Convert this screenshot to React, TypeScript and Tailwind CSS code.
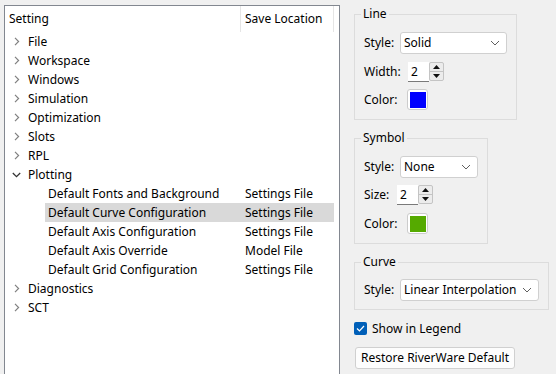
import React from "react";

const ChevRight = () => (
  <svg width="6" height="9" viewBox="0 0 6 9">
    <path d="M1 0.8 L4.6 4.5 L1 8.2" fill="none" stroke="#808080" strokeWidth="1.2" />
  </svg>
);
const ChevDown = () => (
  <svg width="9" height="6" viewBox="0 0 9 6">
    <path d="M0.8 1 L4.5 4.6 L8.2 1" fill="none" stroke="#333" strokeWidth="1.3" />
  </svg>
);
const ComboChev = () => (
  <svg width="10" height="6" viewBox="0 0 10 6">
    <path d="M1 1 L5 5 L9 1" fill="none" stroke="#606060" strokeWidth="1" />
  </svg>
);

const Combo = ({ value, w }: { value: string; w: string }) => (
  <div className={`${w} h-[22px] bg-white border border-[#d0d0d0] rounded-[3px] flex items-center justify-between pl-[3px] pr-[6px]`}>
    <span>{value}</span>
    <ComboChev />
  </div>
);

const Spin = () => (
  <div className="w-[36px] h-[20px] flex">
    <div className="w-[21px] h-full bg-white border-b border-[#7a7a7a] pl-[3px] flex items-center">2</div>
    <div className="w-[15px] h-[19px] border border-[#c4c4c4] bg-[#ececec] rounded-[2px] flex flex-col">
      <div className="flex-1 flex items-center justify-center border-b border-[#c4c4c4]">
        <svg width="7" height="4" viewBox="0 0 7 4"><path d="M0 4 L3.5 0 L7 4 Z" fill="#111" /></svg>
      </div>
      <div className="flex-1 flex items-center justify-center">
        <svg width="7" height="4" viewBox="0 0 7 4"><path d="M0 0 L3.5 4 L7 0 Z" fill="#111" /></svg>
      </div>
    </div>
  </div>
);

const Swatch = ({ color }: { color: string }) => (
  <div className="w-[21px] h-[21px] bg-white border border-[#cccccc] rounded-[3px] flex items-center justify-center">
    <div className="w-[16px] h-[16px]" style={{ backgroundColor: color }} />
  </div>
);

const topItems1 = ["File", "Workspace", "Windows", "Simulation", "Optimization", "Slots", "RPL"];
const children: [string, string][] = [
  ["Default Fonts and Background", "Settings File"],
  ["Default Curve Configuration", "Settings File"],
  ["Default Axis Configuration", "Settings File"],
  ["Default Axis Override", "Model File"],
  ["Default Grid Configuration", "Settings File"],
];

const TopRow = ({ label, open }: { label: string; open?: boolean }) => (
  <div className="h-[19px] flex items-center">
    <span className="w-[23px] flex justify-center">{open ? <ChevDown /> : <ChevRight />}</span>
    <span>{label}</span>
  </div>
);

export default function App() {
  return (
    <div className="w-[556px] h-[374px] bg-[#f0f0f0] flex overflow-hidden text-[12px] text-black font-['Noto_Sans',sans-serif] leading-[16px]">
      <div className="ml-[4px] mt-[5px] w-[336px] h-[380px] shrink-0 bg-white border border-[#828790]">
        <div className="h-[26px] flex">
          <div className="w-[236px] border-r border-[#e5e5e5] pl-[4px] flex items-center">Setting</div>
          <div className="w-[93px] border-r border-[#e5e5e5] pl-[4px] flex items-center">Save Location</div>
        </div>
        {topItems1.map((t) => (
          <TopRow key={t} label={t} />
        ))}
        <TopRow label="Plotting" open />
        {children.map(([a, b], i) => (
          <div key={a} className="h-[19px] pl-[40px] flex">
            <div className={`w-[289px] h-full flex items-center ${i === 1 ? "bg-[#d9d9d9]" : ""}`}>
              <span className="w-[200px] pl-[3px]">{a}</span>
              <span>{b}</span>
            </div>
          </div>
        ))}
        <TopRow label="Diagnostics" />
        <TopRow label="SCT" />
      </div>

      <div className="ml-[14px] mt-[6px] flex flex-col">
        <fieldset className="w-[163px] border border-[#dcdcdc]">
          <legend className="ml-[6px] px-[2px]">Line</legend>
          <div className="pl-[9px] pt-[10px] pb-[9px] flex flex-col">
            <div className="flex items-center h-[22px]">
              <span className="w-[36px]">Style:</span>
              <Combo value="Solid" w="w-[107px]" />
            </div>
            <div className="flex items-center h-[20px] mt-[8px]">
              <span className="w-[44px]">Width:</span>
              <Spin />
            </div>
            <div className="flex items-center h-[21px] mt-[7px]">
              <span className="w-[43px]">Color:</span>
              <Swatch color="#0000ff" />
            </div>
          </div>
        </fieldset>

        <fieldset className="mt-[10px] w-[134px] border border-[#dcdcdc]">
          <legend className="ml-[6px] px-[2px]">Symbol</legend>
          <div className="pl-[9px] pt-[10px] pb-[9px] flex flex-col">
            <div className="flex items-center h-[22px]">
              <span className="w-[36px]">Style:</span>
              <Combo value="None" w="w-[78px]" />
            </div>
            <div className="flex items-center h-[20px] mt-[7px]">
              <span className="w-[33px]">Size:</span>
              <Spin />
            </div>
            <div className="flex items-center h-[21px] mt-[8px]">
              <span className="w-[43px]">Color:</span>
              <Swatch color="#55aa00" />
            </div>
          </div>
        </fieldset>

        <fieldset className="mt-[10px] w-[195px] border border-[#dcdcdc]">
          <legend className="ml-[6px] px-[2px]">Curve</legend>
          <div className="pl-[9px] pt-[9px] pb-[8px] flex flex-col">
            <div className="flex items-center h-[22px]">
              <span className="w-[36px]">Style:</span>
              <Combo value="Linear Interpolation" w="w-[139px]" />
            </div>
          </div>
        </fieldset>

        <div className="mt-[12px] flex items-center h-[13px]">
          <div className="w-[13px] h-[13px] rounded-[2px] bg-[#005fb8] flex items-center justify-center">
            <svg width="9" height="7" viewBox="0 0 9 7"><path d="M1 3.5 L3.5 6 L8 1" fill="none" stroke="#fff" strokeWidth="1.2" /></svg>
          </div>
          <span className="ml-[5px]">Show in Legend</span>
        </div>

        <div className="mt-[12px] ml-[1px] w-[160px] h-[22px] bg-[#fdfdfd] border border-[#d0d0d0] rounded-[3px] flex items-center justify-center whitespace-nowrap">
          Restore RiverWare Default
        </div>
      </div>
    </div>
  );
}
